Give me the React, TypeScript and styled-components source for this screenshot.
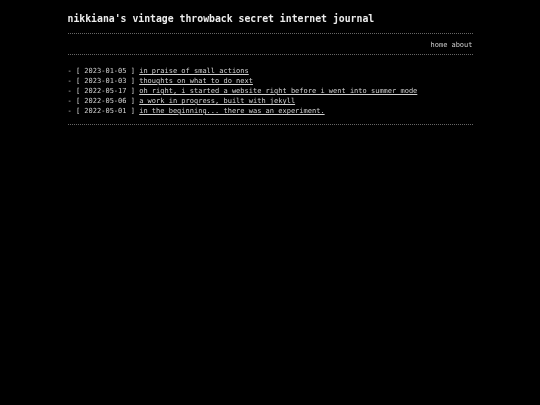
import React from "react";
import styled, { createGlobalStyle } from "styled-components";

const posts = [
  { date: "2023-01-05", title: "in praise of small actions" },
  { date: "2023-01-03", title: "thoughts on what to do next" },
  {
    date: "2022-05-17",
    title: "oh right, i started a website right before i went into summer mode",
  },
  { date: "2022-05-06", title: "a work in progress, built with jekyll" },
  { date: "2022-05-01", title: "in the beginning... there was an experiment." },
];

const App: React.FC = () => {
  return (
    <>
      <GlobalStyle />
      <Root>
        <Header>
          <Title>nikkiana's vintage throwback secret internet journal</Title>
        </Header>
        <Nav>
          <NavLink href="#">home</NavLink>
          <NavLink href="#">about</NavLink>
        </Nav>
        <PostList>
          {posts.map((post) => (
            <PostItem key={post.date}>
              - [ {post.date} ] <PostLink href="#">{post.title}</PostLink>
            </PostItem>
          ))}
        </PostList>
      </Root>
    </>
  );
};

export default App;

const GlobalStyle = createGlobalStyle`
  html, body {
    margin: 0;
    background: #000;
    color: #cfcfcf;
    font-family: "DejaVu Sans Mono", "Liberation Mono", monospace;
  }
`;

const Root = styled.div`
  width: 405px;
  margin: 0 auto;
  padding-top: 12px;
  filter: grayscale(1);
`;

const Header = styled.header`
  border-bottom: 1px dotted #666;
  padding-bottom: 7px;
`;

const Title = styled.h1`
  margin: 0;
  font-size: 9.8px;
  line-height: 14px;
  font-weight: bold;
  color: #ececec;
`;

const Nav = styled.nav`
  display: flex;
  justify-content: flex-end;
  gap: 4px;
  padding: 6px 0 4px;
  line-height: 10px;
  border-bottom: 1px dotted #666;
`;

const NavLink = styled.a`
  font-size: 7px;
  color: #cfcfcf;
  text-decoration: none;
`;

const PostList = styled.ul`
  list-style: none;
  margin: 0;
  padding: 11px 0 8px;
  border-bottom: 1px dotted #666;
`;

const PostItem = styled.li`
  font-size: 7px;
  line-height: 10px;
  white-space: pre;
`;

const PostLink = styled.a`
  color: #cfcfcf;
  text-decoration: underline;
`;
